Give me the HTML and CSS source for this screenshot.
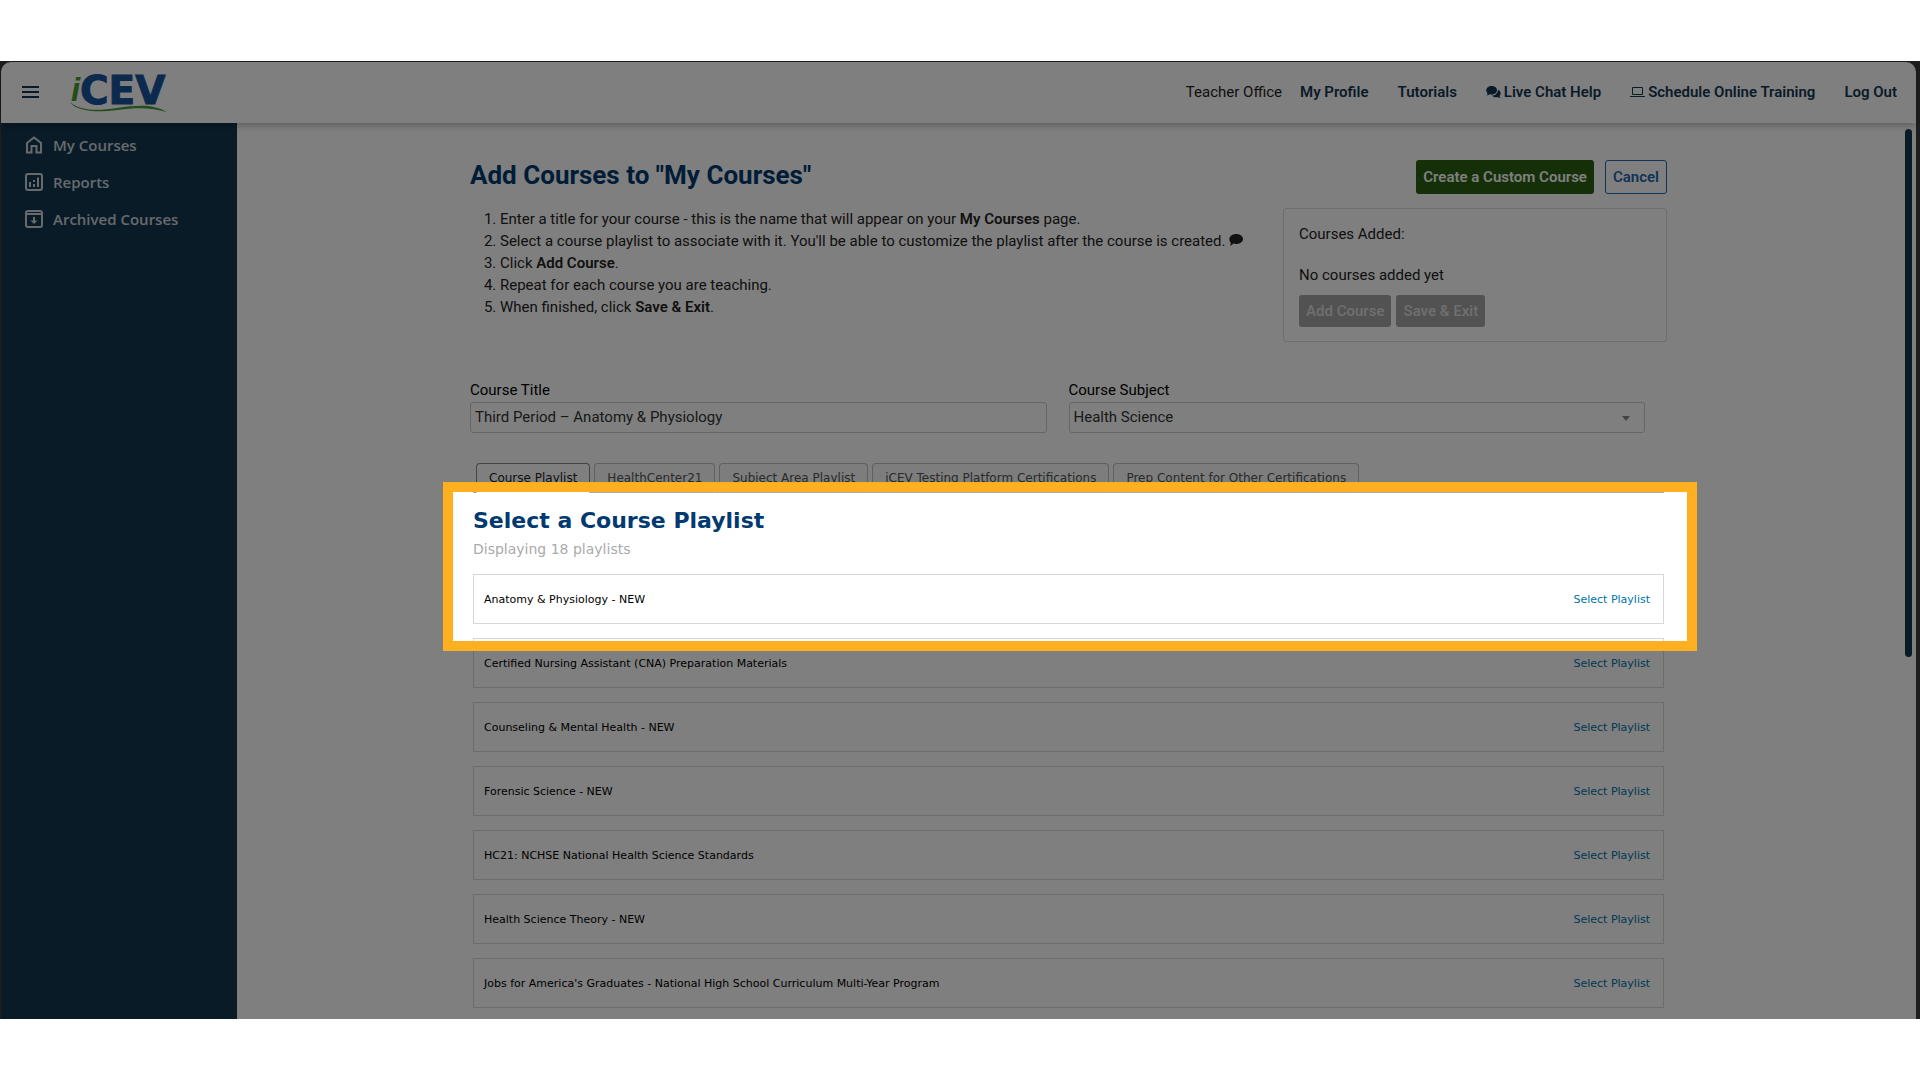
FILE: index.html
```html
<!DOCTYPE html>
<html lang="en">
<head>
    <meta charset="UTF-8">
    <meta name="viewport" content="width=device-width, initial-scale=1.0">
    <title>iCEV - Add Courses</title>
    <link rel="stylesheet" href="styles.css">
</head>
<body>
    <div class="window">
        <div class="app">
            <header class="header">
                <button type="button" class="menu-button" aria-label="Menu">
                    <svg width="17" height="12" viewBox="0 0 17 12"><path d="M0 1h17M0 6h17M0 11h17" stroke="#153751" stroke-width="2"/></svg>
                </button>
                <a href="#" class="logo" aria-label="iCEV">
                    <svg width="108" height="52" viewBox="0 0 108 52">
                        <text x="1" y="35" class="logo-i">i</text>
                        <text x="10" y="38" class="logo-cev">CEV</text>
                        <path d="M0 36c10 9 27 9 47 6c21-3 36-4 50 4c-15-4-28-5-49-2c-23 3-42 1-48-8z" fill="#4a9a3a"/>
                    </svg>
                </a>
                <nav class="top-nav">
                    <span class="office">Teacher Office</span>
                    <a href="#">My Profile</a>
                    <a href="#">Tutorials</a>
                    <a href="#">
                        <svg width="15" height="12" viewBox="0 0 16 13"><path d="M6 0c3.300 0 5.800 2 5.800 4.600S9.300 9.200 6 9.200c-.8 0-1.500-.1-2.200-.3C3 9.500 1.700 10 .5 10c.6-.7 1-1.400 1.100-2C.7 7.200.2 6 .2 4.600.2 2 2.800 0 6 0z" fill="#153751"/><path d="M12.900 4c1.700.7 2.900 2.100 2.900 3.900 0 1.200-.5 2.200-1.300 3 .1.700.6 1.500 1.200 2.100-1.300 0-2.500-.4-3.400-1-2.500.6-4.800-.1-6.100-1.700 3.700.1 6.700-2.500 6.700-6.300z" fill="#153751"/></svg>
                        Live Chat Help
                    </a>
                    <a href="#">
                        <svg width="15" height="12" viewBox="0 0 15 12"><path d="M2.500 1.500h10v7h-10zM0 10.500h15" fill="none" stroke="#153751" stroke-width="1"/></svg>
                        Schedule Online Training
                    </a>
                    <a href="#">Log Out</a>
                </nav>
            </header>

            <div class="body">
                <nav class="sidebar">
                    <a href="#">
                        <svg width="18" height="18" viewBox="0 0 18 18"><path d="M2 7l7-5.500L16 7v9.500h-4.500V10h-5v6.500H2z"/></svg>
                        My Courses
                    </a>
                    <a href="#">
                        <svg width="18" height="18" viewBox="0 0 18 18"><rect x="1" y="1" width="16" height="16" rx="2"/><path d="M5 9v5M9 7v2M9 11v3M13 4.500V14"/></svg>
                        Reports
                    </a>
                    <a href="#">
                        <svg width="18" height="18" viewBox="0 0 18 18"><rect x="1" y="1" width="16" height="16" rx="2"/><path d="M1 4h16M9 7v5"/><path d="M5.500 10.500h7L9 14z" fill="#ccd4da" stroke="none"/></svg>
                        Archived Courses
                    </a>
                </nav>

                <main class="main">
                    <div class="content">
                        <div class="intro">
                            <div class="instructions">
                                <h1>Add Courses to "My Courses"</h1>
                                <ol>
                                    <li>Enter a title for your course - this is the name that will appear on your <b>My Courses</b> page.</li>
                                    <li>Select a course playlist to associate with it. You'll be able to customize the playlist after the course is created.
                                        <svg width="14" height="12" viewBox="0 0 14 12"><path d="M7.200 0C11 0 14 2.200 14 5s-3 5-6.800 5c-1 0-1.900-.1-2.700-.4C3.500 10.800 2 11.800.8 12c.8-1 1.100-2.200 1-3.200C.8 7.800.4 6.500.4 5c0-2.800 3-5 6.800-5z" fill="#222"/></svg>
                                    </li>
                                    <li>Click <b>Add Course</b>.</li>
                                    <li>Repeat for each course you are teaching.</li>
                                    <li>When finished, click <b>Save &amp; Exit</b>.</li>
                                </ol>
                            </div>
                            <div class="summary">
                                <div class="actions">
                                    <button type="button" class="btn btn-green">Create a Custom Course</button>
                                    <button type="button" class="btn btn-outline">Cancel</button>
                                </div>
                                <div class="added">
                                    <p>Courses Added:</p>
                                    <p>No courses added yet</p>
                                    <div class="added-buttons">
                                        <button type="button" class="btn" disabled>Add Course</button>
                                        <button type="button" class="btn" disabled>Save &amp; Exit</button>
                                    </div>
                                </div>
                            </div>
                        </div>

                        <form class="course-form">
                            <div class="field">
                                <label for="courseTitle">Course Title</label>
                                <input type="text" id="courseTitle" value="Third Period – Anatomy &amp; Physiology">
                            </div>
                            <div class="field">
                                <label for="courseSubject">Course Subject</label>
                                <div class="select-wrap">
                                    <select id="courseSubject">
                                        <option>Health Science</option>
                                    </select>
                                    <svg width="8" height="5" viewBox="0 0 8 5"><path d="M0 0h8L4 5z" fill="#888"/></svg>
                                </div>
                            </div>
                        </form>

                        <section class="playlists">
                            <div class="tabs">
                                <button type="button" class="tab active">Course Playlist</button>
                                <button type="button" class="tab">HealthCenter21</button>
                                <button type="button" class="tab">Subject Area Playlist</button>
                                <button type="button" class="tab">iCEV Testing Platform Certifications</button>
                                <button type="button" class="tab">Prep Content for Other Certifications</button>
                            </div>
                            <h2>Select a Course Playlist</h2>
                            <p class="count">Displaying 18 playlists</p>
                            <ul class="playlist-list">
                                <li><span>Anatomy &amp; Physiology - NEW</span><a href="#">Select Playlist</a></li>
                                <li><span>Certified Nursing Assistant (CNA) Preparation Materials</span><a href="#">Select Playlist</a></li>
                                <li><span>Counseling &amp; Mental Health - NEW</span><a href="#">Select Playlist</a></li>
                                <li><span>Forensic Science - NEW</span><a href="#">Select Playlist</a></li>
                                <li><span>HC21: NCHSE National Health Science Standards</span><a href="#">Select Playlist</a></li>
                                <li><span>Health Science Theory - NEW</span><a href="#">Select Playlist</a></li>
                                <li><span>Jobs for America's Graduates - National High School Curriculum Multi-Year Program</span><a href="#">Select Playlist</a></li>
                            </ul>
                            <!-- dims everything outside the first playlist -->
                            <div class="spotlight"></div>
                        </section>
                    </div>
                    <div class="scroll-thumb"></div>
                </main>
            </div>
        </div>
    </div>
</body>
</html>
```
FILE: styles.css
```css
* {
    box-sizing: border-box;
}
body {
    margin: 0;
    padding: 61px 0;
    background-color: #fff;
    color: #222;
    font-family: Roboto, sans-serif;
    font-size: 15px;
}
a {
    text-decoration: none;
}
svg {
    flex: none;
}
.window {
    padding: 1px 4px 0 1px;
    background-color: #3c3c3c;
    overflow: hidden;
}
.app {
    background-color: #fff;
    border-radius: 10px 10px 0 0;
}

/* Header */
.header {
    position: relative;
    display: flex;
    align-items: center;
    height: 61px;
    padding: 0 19px 1px 21px;
    box-shadow: 0 2px 8px rgba(0, 0, 0, 0.3);
}
.menu-button {
    display: flex;
    padding: 0;
    border: none;
    background: none;
    cursor: pointer;
}
.logo {
    display: flex;
    margin-left: 31px;
}
.logo-i {
    fill: #4a9a2a;
    font: italic bold 33px "Liberation Sans", sans-serif;
}
.logo-cev {
    fill: #17559c;
    stroke: #17559c;
    stroke-width: 1;
    font: bold 39px "DejaVu Sans", sans-serif;
}
.top-nav {
    display: flex;
    align-items: center;
    gap: 29px;
    margin-left: auto;
}
.top-nav a {
    display: flex;
    align-items: center;
    gap: 3px;
    color: #153751;
    font-weight: 600;
}
.office {
    margin-right: -11px;
}

/* Sidebar */
.body {
    display: flex;
}
.sidebar {
    width: 236px;
    padding: 3px 0 0 24px;
    background-color: #143750;
}
.sidebar a {
    display: flex;
    align-items: center;
    gap: 10px;
    height: 37px;
    color: #ccd4da;
    font-family: "Open Sans", "Noto Sans", sans-serif;
    font-size: 15px;
    font-weight: 600;
}
.sidebar svg {
    fill: none;
    stroke: #ccd4da;
    stroke-width: 2;
}

/* Main */
.main {
    position: relative;
    flex: 1;
    padding: 37px 16px 11px 0;
}
.content {
    max-width: 1197px;
    margin: 0 auto;
}
.scroll-thumb {
    position: absolute;
    top: 6px;
    right: 4px;
    width: 7px;
    height: 528px;
    border-radius: 4px;
    background-color: #153751;
}
.intro {
    display: flex;
    justify-content: space-between;
}
h1 {
    margin: 0;
    color: #003a70;
    font-size: 26px;
    line-height: 30px;
}
ol {
    margin: 18px 0 0;
    padding-left: 30px;
    line-height: 22px;
}
b {
    font-weight: 600;
}
.summary {
    width: 384px;
}
.actions {
    display: flex;
    justify-content: flex-end;
    gap: 11px;
    margin-bottom: 14px;
}
.btn {
    height: 34px;
    padding: 0 7px;
    border: none;
    border-radius: 3px;
    font-family: Roboto, sans-serif;
    font-size: 15px;
    font-weight: 600;
    cursor: pointer;
}
.btn-green {
    background-color: #2a6010;
    color: #fff;
}
.btn-outline {
    border: 1px solid #1f68ad;
    background-color: #fff;
    color: #1f68ad;
}
.btn:disabled {
    height: 32px;
    background-color: #a4a4a4;
    color: #dcdcdc;
}
.added {
    padding: 14px 15px;
    border: 1px solid #dcdcdc;
    border-radius: 3px;
}
.added p {
    margin: 0 0 19px;
    line-height: 22px;
}
.added p + p {
    margin-bottom: 9px;
}
.added-buttons {
    display: flex;
    gap: 5px;
}

/* Form */
.course-form {
    display: grid;
    grid-template-columns: 1fr 1fr;
    margin-top: 37px;
}
.field {
    padding-right: 22px;
    color: #000;
}
.field label {
    display: block;
    line-height: 23px;
}
.field input,
.field select {
    width: 100%;
    height: 31px;
    padding: 0 4px 1px;
    border: 1px solid #ccc;
    border-radius: 3px;
    background-color: #fff;
    color: #333;
    font-family: Roboto, sans-serif;
    font-size: 15px;
    appearance: none;
}
.select-wrap {
    position: relative;
}
.select-wrap svg {
    position: absolute;
    top: 14px;
    right: 15px;
}

/* Playlists */
.playlists {
    position: relative;
    margin: 30px 3px 0;
    font-family: Verdana, "DejaVu Sans", sans-serif;
}
.tabs {
    display: flex;
    gap: 4px;
    padding-left: 3px;
    border-bottom: 1px solid #aaa;
}
.tab {
    height: 30px;
    margin-bottom: -1px;
    padding: 0 12px;
    border: 1px solid #c0c0c0;
    border-bottom-color: #aaa;
    border-radius: 4px 4px 0 0;
    background-color: #fafafa;
    color: #555;
    font-family: Verdana, "DejaVu Sans", sans-serif;
    font-size: 12px;
}
.tab.active {
    border-color: #888;
    border-bottom-color: #fff;
    background-color: #fff;
    color: #222;
}
h2 {
    margin: 14px 0 0;
    color: #003a70;
    font-size: 22px;
    line-height: 28px;
}
.count {
    margin: 4px 0 15px;
    color: #aaa;
    font-size: 14px;
    line-height: 20px;
}
.playlist-list {
    display: flex;
    flex-direction: column;
    gap: 14px;
    margin: 0;
    padding: 0;
    list-style: none;
}
.playlist-list li {
    display: flex;
    align-items: center;
    justify-content: space-between;
    height: 50px;
    padding: 0 13px 0 10px;
    border: 1px solid #d8d8d8;
    color: #000;
    font-size: 11px;
}
.playlist-list a {
    color: #0073aa;
}
.spotlight {
    position: absolute;
    z-index: 1;
    top: 19px;
    left: -30px;
    right: -33px;
    height: 169px;
    border: 10px solid #ffb020;
    box-shadow: 0 0 0 9999px rgba(0, 0, 0, 0.5);
    pointer-events: none;
}
```
